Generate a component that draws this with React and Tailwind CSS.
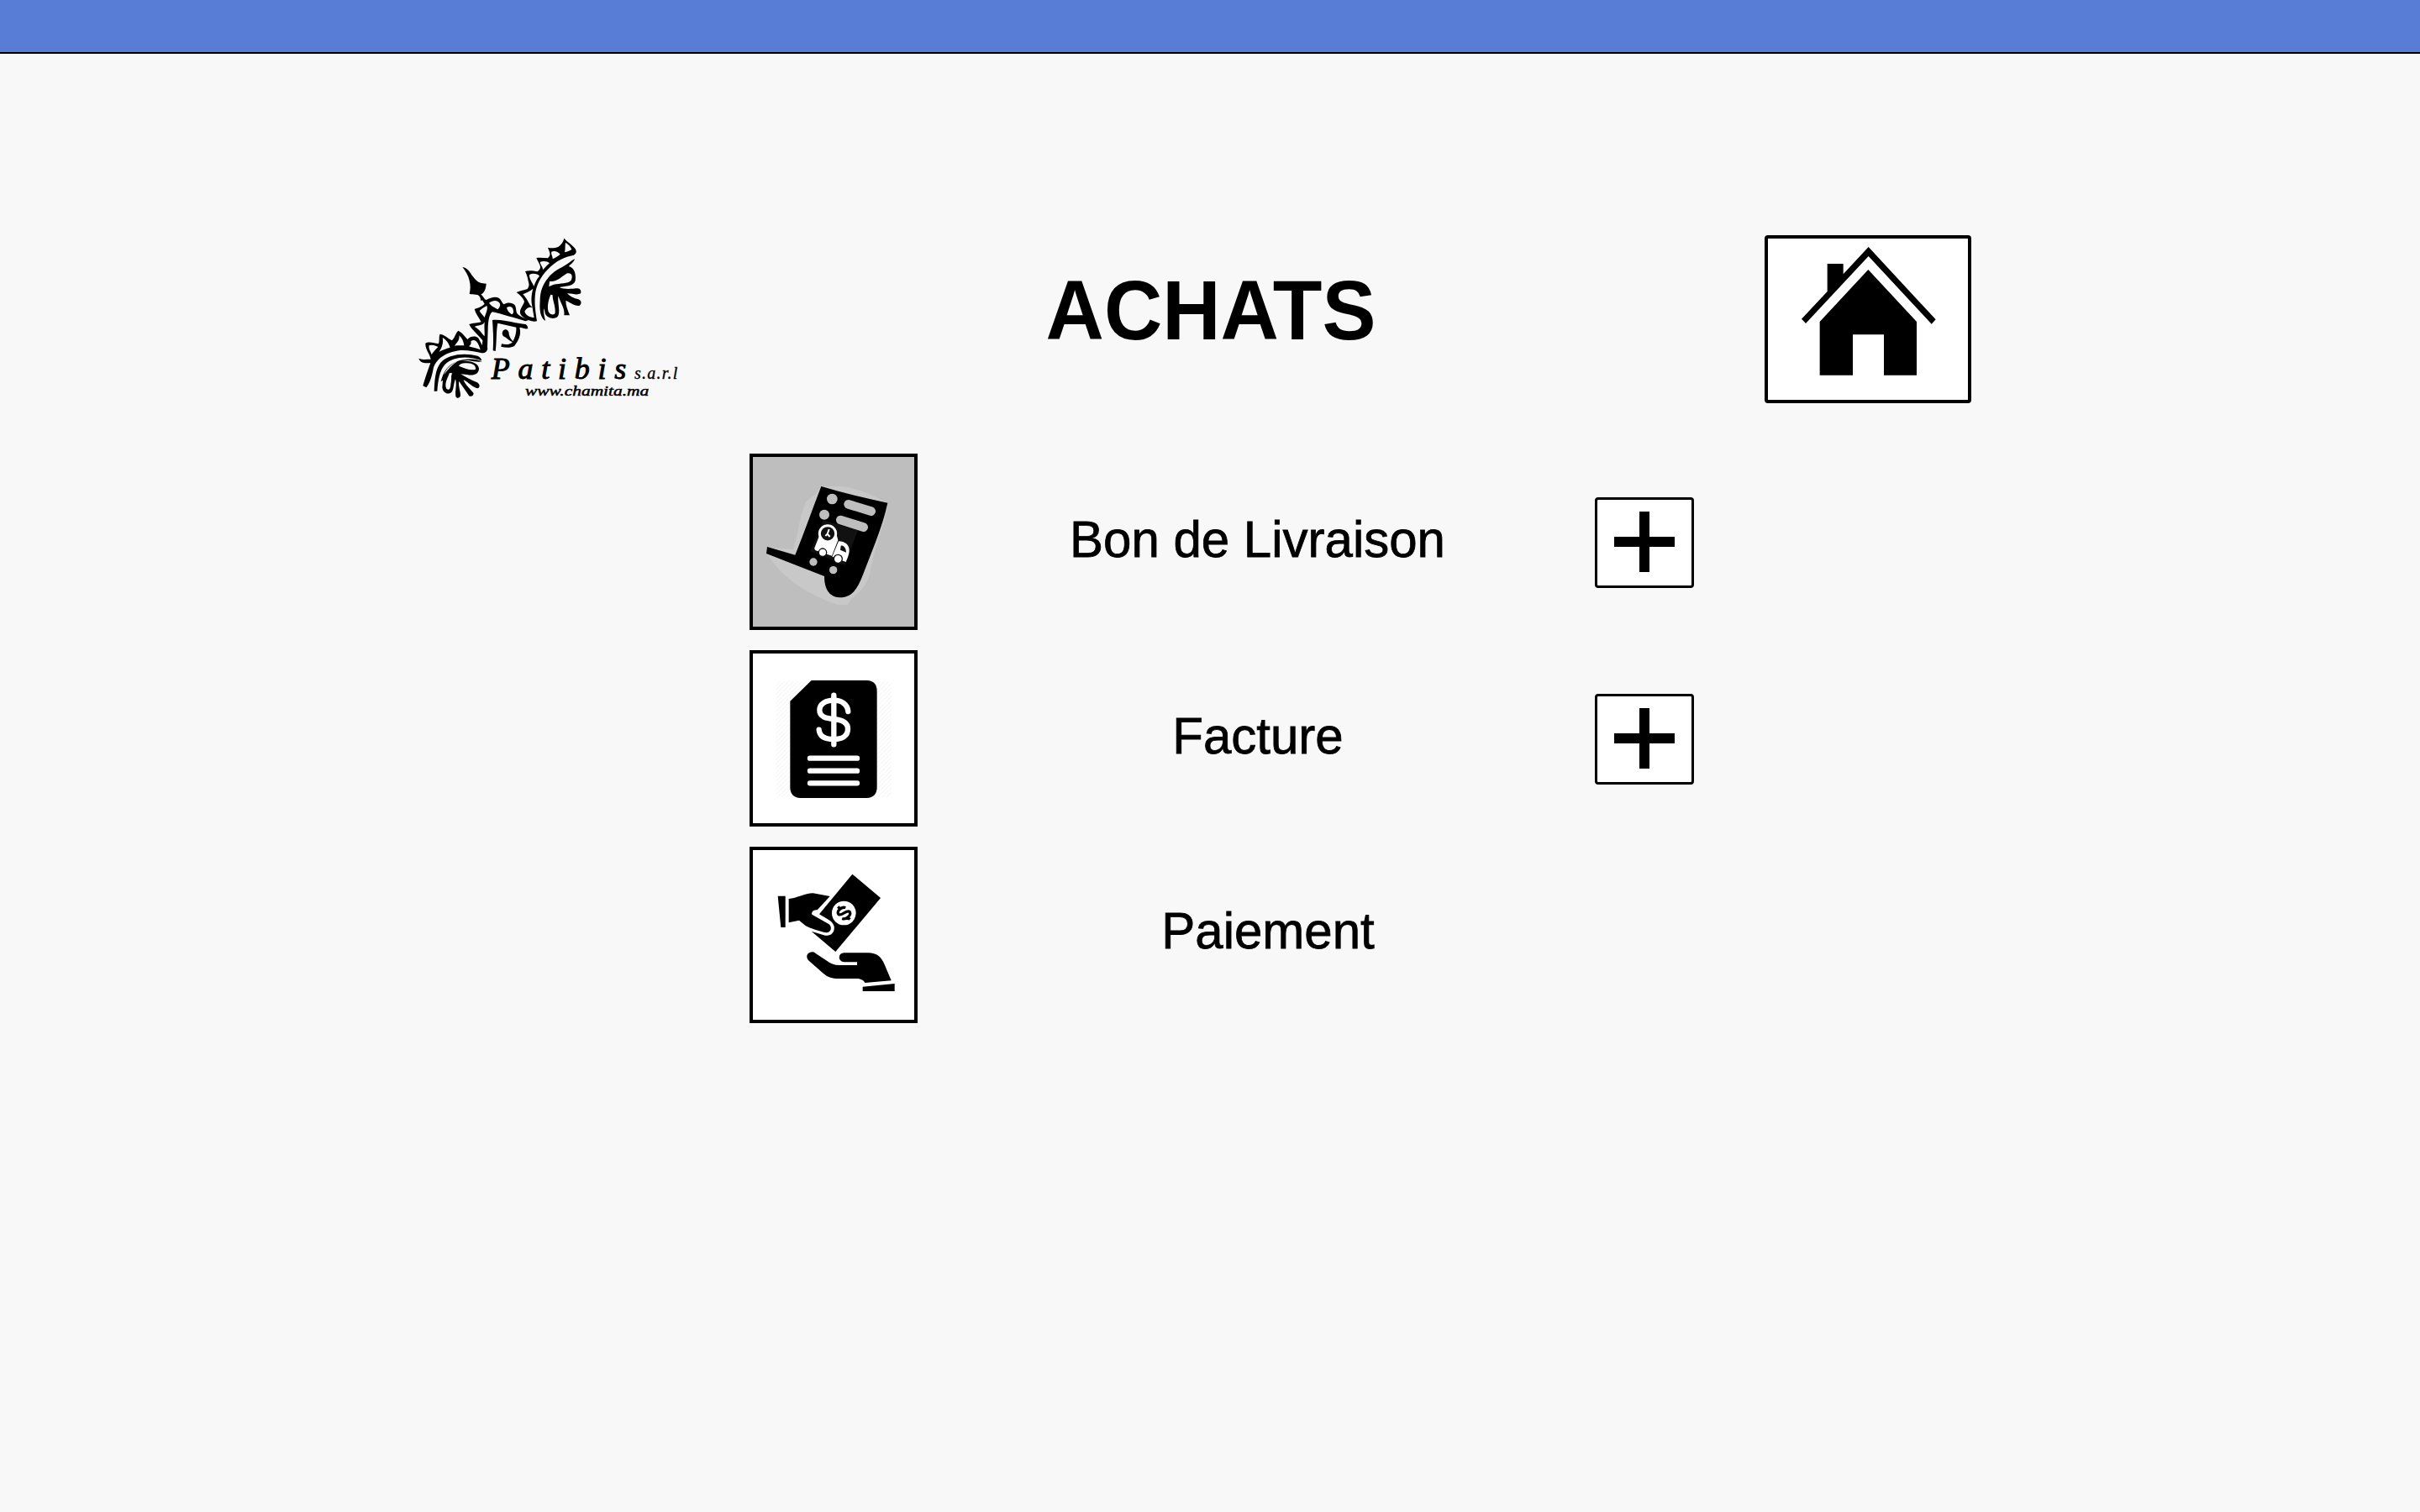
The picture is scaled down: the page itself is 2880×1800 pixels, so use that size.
import React from "react";

function Logo() {
  return (
    <svg viewBox="0 0 1050 660" className="h-[220px] w-[350px]" fill="#000" aria-label="Patibis">
      {/* spear head */}
      <path d="M211 144C224 146 232 154 239 164C252 184 264 198 279 201L296 203C295 222 289 236 277 241C282 246 287 252 291 259L277 264C275 254 273 248 267 244C257 240 246 243 236 239C240 224 240 208 236 192C232 174 222 158 211 144Z" />
      {/* right wing, toothed band */}
      <path
        fillRule="evenodd"
        d="M574 41C586 55 601 62 611 75C620 86 619 95 609 101C575 107 547 122 524 144C497 168 478 201 472 232C466 270 472 302 477 337C461 341 447 334 436 328C424 321 415 313 417 300C420 287 431 275 432 266C427 253 415 242 404 234C417 228 431 227 443 222C449 214 450 207 447 198C444 184 441 170 435 159C450 155 466 158 479 160C487 154 490 148 489 142C486 130 479 121 475 111C489 109 503 112 516 112C524 105 525 97 522 90L516 74C528 77 542 76 554 71C564 64 571 54 574 41Z
        M579 56C577 68 579 79 576 91C585 89 595 85 601 81C597 70 589 62 579 56Z
        M529 89C538 84 553 88 560 98C551 105 542 111 533 115C534 105 526 98 529 89Z
        M488 126C499 121 514 123 522 130C512 137 506 147 498 154C499 144 489 136 488 126Z
        M450 171C462 165 479 167 486 176C475 188 470 201 466 213C461 199 449 187 450 171Z
        M427 241C439 235 453 230 463 221C456 246 456 266 461 288C449 281 446 261 427 241Z
        M433 302C440 289 452 285 461 289C463 303 465 314 467 324C453 323 437 318 433 302Z"
      />
      {/* right wing, leaves */}
      <path
        fillRule="evenodd"
        d="M612 115C608 129 594 136 591 141C612 146 617 171 614 193C607 213 583 211 557 216C572 224 600 222 617 220C631 217 637 229 633 238C620 246 602 237 585 238C595 249 610 256 625 259C638 263 637 278 628 282C610 284 594 268 580 264C580 283 588 300 594 316L574 316C578 295 563 274 553 247C550 273 563 309 550 322C534 333 512 324 506 309L503 292C498 306 505 322 507 336C487 324 486 291 488 264C488 231 498 206 516 184C534 157 564 147 583 134C593 128 602 119 612 115Z
        M522 195C550 198 565 177 585 166C602 163 606 177 599 191C587 204 560 201 537 206C526 211 520 213 520 214Z
        M526 242C517 263 513 286 518 303C525 316 540 317 542 307C544 283 532 263 533 244Z"
      />
      {/* centre ornament */}
      <path
        fillRule="evenodd"
        d="M276 252L296 261C312 253 328 247 342 255C351 262 352 272 359 277C372 269 389 270 398 280C405 291 400 304 409 313C419 323 433 326 448 333L436 337C398 326 354 312 318 304C307 311 303 334 302 366L300 430C299 442 291 449 279 448L283 406C270 390 256 377 246 365C240 358 236 351 235 348C250 344 265 344 278 340C270 325 258 310 254 294C264 290 281 286 290 275Z
        M306 272C321 261 337 262 344 273C349 282 341 289 338 295C328 289 317 286 306 272Z
        M369 289C379 282 390 285 392 296C395 305 392 311 387 313C377 307 371 298 369 289Z
        M272 300C280 291 293 286 298 282C303 294 295 307 290 324C285 315 275 309 272 300Z
        M254 357C267 350 284 355 290 340C288 360 291 377 290 391C279 380 271 365 254 357Z"
      />
      <path d="M318 333C356 329 397 345 437 348C443 352 445 359 445 364C431 366 422 358 415 361C423 385 409 410 397 425C382 434 364 431 349 428L351 418C367 422 382 421 390 411C401 392 404 374 403 359L337 344C331 370 334 408 329 444L320 442C323 404 320 367 318 333Z" />
      <path d="M356 371C367 361 378 372 377 383C379 395 387 404 396 413C379 410 372 397 360 392C353 388 351 378 356 371Z" />
      {/* left wing, toothed band */}
      <path
        fillRule="evenodd"
        d="M55 470C69 476 87 473 98 473C94 453 77 435 79 416C93 408 111 416 125 418C131 408 125 393 131 383C145 385 160 398 173 406C184 398 186 379 196 371C210 377 220 392 229 402C240 389 260 389 267 397C276 409 278 424 291 431L301 433C300 447 290 452 280 451C239 441 206 436 174 447C143 456 118 474 108 502C103 530 97 555 82 574L70 568C77 542 88 511 97 486C81 487 61 489 55 470Z
        M92 424C103 419 115 424 124 429C115 438 107 447 101 456C98 445 89 437 92 424Z
        M140 396C151 402 161 413 167 431C153 435 140 439 128 446C138 430 144 415 140 396Z
        M199 388C210 397 215 410 217 424C205 424 193 423 183 425C192 412 202 404 199 388Z
        M241 409C255 397 268 411 275 439C260 434 247 431 234 427C241 421 243 416 241 409Z"
      />
      {/* left wing, leaves */}
      <path d="M280 478C230 459 179 463 149 491C129 513 124 549 121 587L110 587C112 549 113 513 132 487C157 454 221 449 265 461Q277 466 280 478Z" />
      <path
        fillRule="evenodd"
        d="M281 481C262 486 236 473 211 478C238 479 268 486 270 506C270 526 250 533 228 528L205 526C224 538 241 547 260 554C275 560 275 574 265 577C249 575 235 557 215 547C220 564 242 582 251 595C250 607 237 609 232 600C221 582 209 568 199 551C195 569 205 587 204 604C201 614 189 613 187 605C184 585 192 564 186 544C178 564 181 582 171 592C157 602 141 591 139 574L141 548L134 553C143 517 159 493 191 481C221 469 259 470 281 481Z
        M198 497C222 506 240 515 258 509C260 495 246 486 225 487C210 486 201 490 198 497Z
        M165 522C158 540 145 561 154 578C165 588 169 573 169 563C174 544 168 533 175 523Z
        M194 480C169 490 153 507 145 529C160 507 176 490 194 480Z"
      />
      <g fontFamily='"Liberation Serif", serif' fontStyle="italic" stroke="#000" strokeWidth="3">
        <text x="314" y="544" fontSize="108" textLength="482" lengthAdjust="spacing">Patibis</text>
        <text x="825" y="544" fontSize="60" textLength="154" lengthAdjust="spacing" strokeWidth="1">s.a.r.l</text>
        <text x="435" y="603" fontSize="52" textLength="442" lengthAdjust="spacingAndGlyphs" strokeWidth="1.5">www.chamita.ma</text>
      </g>
    </svg>
  );
}

function HomeIcon() {
  return (
    <svg viewBox="72 72 714 576" className="block h-full w-full" fill="#000">
      <path d="M431 102L671 361L656 377L431 135L207 375L192 359L284 261V162H341V199Z" />
      <path d="M430 183L603 369V560H486V415H375V560H257V369Z" />
    </svg>
  );
}

function DeliveryIcon() {
  return (
    <svg viewBox="78 72 576 606" className="block h-full w-full">
      <path fill="#c8c8c8" d="M322 177L400 178C455 183 510 212 557 235L559 255C540 335 510 405 497 480C490 525 460 555 430 578L416 600H380C310 575 195 525 130 420L127 395L222 402L238 340C245 300 255 260 266 236C280 215 300 215 322 177Z" />
      <path d="M322 177C400 200 480 220 559 236C540 325 500 415 470 495C451 545 430 574 388 574C350 572 333 542 333 498L126 417L129 393L229 422C262 340 290 260 322 177Z" />
      <path fill="#111" d="M329 298L453 334L407 459L284 408Z" />
      <g fill="#bebebe">
        <circle cx="361" cy="222" r="19" />
        <circle cx="333" cy="278" r="18" />
        <circle cx="294" cy="447" r="14" />
        <circle cx="365" cy="476" r="14" />
      </g>
      <path stroke="#bebebe" strokeWidth="32" strokeLinecap="round" d="M419 241L500 266M391 297L473 323" />
      <path fill="#fff" d="M314 356L298 397C297 405 305 408 312 409L360 425L382 369L377 350Z" />
      <path fill="#fff" d="M384 373C402 373 418 382 421 397C425 414 416 434 410 447L361 428Z" />
      <path fill="#111" d="M392 389C403 386 410 398 411 413L390 404Z" />
      <circle cx="345" cy="346" r="29" fill="#111" stroke="#fff" strokeWidth="9" />
      <path d="M350 330L344 347L353 357M344 347L337 354" stroke="#fff" strokeWidth="6" fill="none" />
      <circle cx="327" cy="413" r="14" fill="#fff" stroke="#111" strokeWidth="4" />
      <circle cx="382" cy="436" r="15" fill="#fff" stroke="#111" strokeWidth="4" />
    </svg>
  );
}

function InvoiceIcon() {
  return (
    <svg viewBox="78 54 576 606" className="block h-full w-full" fill="none">
      <defs>
        <pattern id="hatch" width="11" height="11" patternUnits="userSpaceOnUse" patternTransform="rotate(45)">
          <path d="M0 0V11" stroke="#f3f3f3" strokeWidth="5" />
        </pattern>
      </defs>
      <path fill="url(#hatch)" d="M160 154H573V567H160Z" />
      <path fill="#000" d="M287 150H485Q521 152 521 188V534Q519 568 485 570H247Q213 568 211 534V224Z" />
      <g stroke="#fff" strokeWidth="19" strokeLinecap="round">
        <path d="M367 203V379" />
        <path d="M418 261C416 235 394 221 367 221C337 221 316 235 316 256C316 282 342 286 367 288C398 291 417 300 417 323C417 349 396 360 367 360C335 360 316 350 314 326" />
        <path d="M282 428H450M282 473H450M282 517H450" />
      </g>
    </svg>
  );
}

function PaymentIcon() {
  return (
    <svg viewBox="78 66 576 606" className="block h-full w-full" fill="#000">
      <path d="M167 230H194V342H178Z" />
      <path d="M206 240C235 238 262 221 293 220L353 231L308 280C294 278 286 288 289 296L350 331C362 342 357 361 340 361C316 357 282 345 267 337L243 317L206 325Z" />
      <path d="M433 152L534 237L373 429L287 356L336 371C358 375 371 358 368 338C364 325 355 318 345 313L315 295Z" />
      <circle cx="403" cy="291" r="43" fill="#fff" />
      <g transform="translate(403 291) rotate(-43)" fill="none" stroke="#000" strokeWidth="10">
        <path d="M17 -10C11 -24 -16 -23 -17 -10C-16 3 17 -3 18 10C17 24 -11 24 -18 10M0 -31V-19M0 19V31" />
      </g>
      <path d="M273 438C281 428 294 428 301 434L351 467C360 473 370 476 385 477H450V466H404C380 464 381 434 404 433H490C520 433 537 447 548 475L572 532L478 540C474 532 465 525 449 525H375C355 524 341 516 330 507L278 461C270 454 269 445 273 438Z" />
      <path d="M470 554L584 543V570H470Z" />
    </svg>
  );
}

function AddButton() {
  return (
    <button className="mt-0.5 flex h-[108px] w-[118px] items-center justify-center rounded-[4px] border-3 border-black bg-white">
      <svg viewBox="0 0 72 72" className="-mt-0.5 size-[72px]" fill="#000">
        <path d="M30 0H42V30H72V42H42V72H30V42H0V30H30Z" />
      </svg>
    </button>
  );
}

const rows = [
  { label: "Bon de Livraison", Icon: DeliveryIcon, box: "bg-[#bebebe]", text: "pl-[3px] pb-1", add: true },
  { label: "Facture", Icon: InvoiceIcon, box: "bg-white", text: "pl-[4px] pb-1", add: true },
  { label: "Paiement", Icon: PaymentIcon, box: "bg-white", text: "pl-[28px] pb-2", add: false },
];

export default function App() {
  return (
    <div className="min-h-screen bg-[#f8f8f8] font-['Liberation_Sans',Arial,sans-serif] text-black">
      <div className="h-16 border-b-2 border-black bg-[#587dd6]" />
      <header className="grid grid-cols-[350px_1fr_246px] items-start pt-[206px] pr-[534px] pl-[480px]">
        <Logo />
        <h1 className="mt-[53px] origin-[50%_81%] scale-y-[1.045] pr-[48px] text-center text-[96px] leading-[96px] font-bold">
          ACHATS
        </h1>
        <button className="mt-[10px] h-[200px] w-[246px] rounded-[4px] border-4 border-black bg-white">
          <HomeIcon />
        </button>
      </header>
      <main className="mt-[50px] flex flex-col gap-6 pr-[864px] pl-[892px]">
        {rows.map(({ label, Icon, box, text, add }) => (
          <div key={label} className="grid h-[210px] grid-cols-[200px_1fr_118px] items-center">
            <button className={`h-[210px] w-[200px] border-4 border-black ${box}`}>
              <Icon />
            </button>
            <div className={`text-center text-[60px] leading-[60px] [-webkit-text-stroke:0.8px_#000] ${text}`}>
              <span className="inline-block origin-[50%_85%] scale-y-[1.03]">{label}</span>
            </div>
            {add && <AddButton />}
          </div>
        ))}
      </main>
    </div>
  );
}
